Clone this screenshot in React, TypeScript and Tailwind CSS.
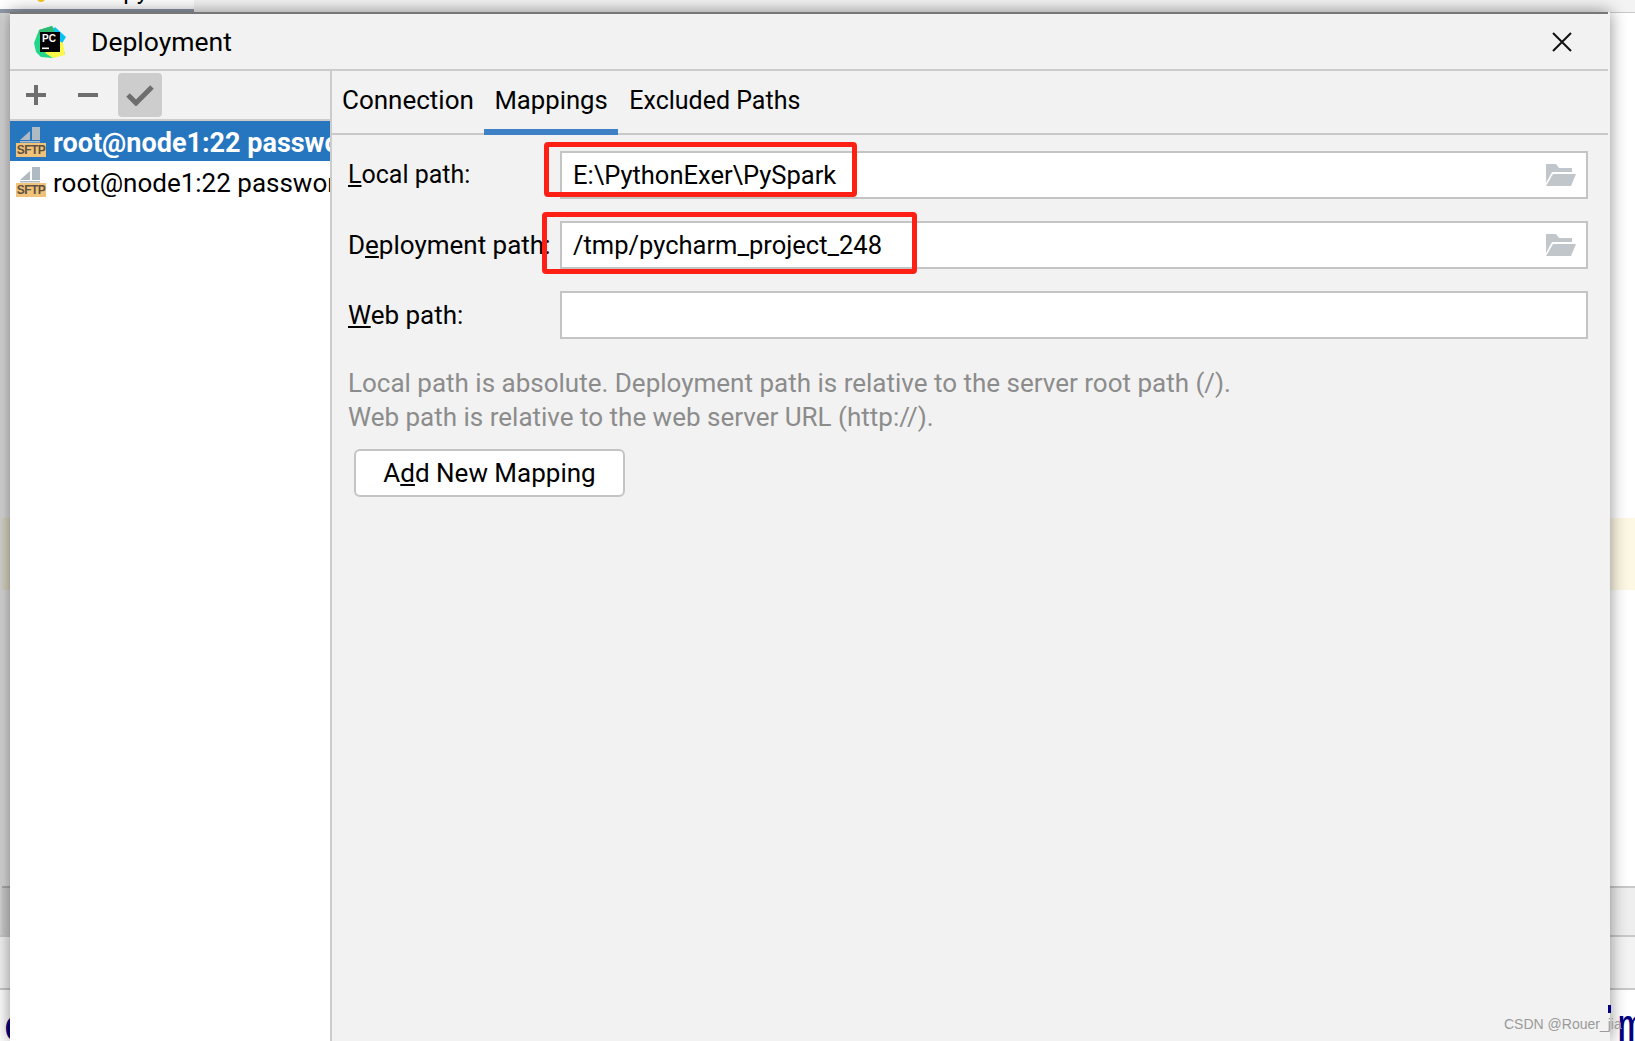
// App.tsx
const uiFont = "font-['Roboto','Liberation_Sans',sans-serif]";

function PyCharmLogo() {
  return (
    <svg width="34" height="34" viewBox="0 0 34 34" className="shrink-0">
      <polygon points="1,18 6,5 19,1 25,8 32,12 28,18 32,29 19,33 8,32 3,27" fill="#21d789" />
      <polygon points="22,2 33,12 28,20 18,8" fill="#07c3f2" />
      <polygon points="20,33 32,30 30,18 22,14 12,28" fill="#fcf84a" />
      <polygon points="6,5 19,1 22,8 6,10" fill="#2fb86e" />
      <rect x="7" y="7" width="20" height="20" fill="#000" />
      <rect x="9" y="22.5" width="7" height="1.6" fill="#fff" />
      <text x="9" y="17" fontSize="10" fontWeight="700" fill="#fff" fontFamily="Liberation Sans, sans-serif">
        PC
      </text>
    </svg>
  );
}

function SftpIcon() {
  return (
    <div className="relative w-[30px] h-[30px] shrink-0 mt-[1px]">
      <svg width="30" height="16" viewBox="0 0 30 16" className="block">
        <polygon points="4,13 14,4 14,13" fill="#b0bac2" />
        <rect x="16" y="0" width="8" height="13" fill="#b0bac2" />
        <rect x="4" y="14" width="20" height="1.5" fill="#b0bac2" />
      </svg>
      <div className="absolute left-0 top-[16px] w-[30px] h-[14px] bg-[#f0c27a] flex items-center justify-center font-['Liberation_Sans',sans-serif] text-[12px] leading-none font-bold tracking-[-0.6px] text-[#5f5040]">
        SFTP
      </div>
    </div>
  );
}

function FolderIcon() {
  return (
    <svg width="30" height="22" viewBox="0 0 30 22" className="shrink-0">
      <polygon points="0,0 10,0 13,4 26,4 26,8 6,8 0,19" fill="#c0c6ca" />
      <polygon points="7,10 30,10 25,22 0,22" fill="#c0c6ca" />
    </svg>
  );
}

function PathField({ value, folder }: { value?: string; folder?: boolean }) {
  return (
    <div className="flex-1 h-[48px] bg-white border-2 border-[#c4c4c4] flex items-center justify-between pl-[11px] pr-[10px] text-black text-[25.5px]">
      <span>{value}</span>
      {folder && <FolderIcon />}
    </div>
  );
}

function ConfigRow({ name, active }: { name: string; active?: boolean }) {
  return (
    <div
      className={
        active
          ? 'h-[40px] bg-[#2675bf] text-white text-[27px] font-bold flex items-center pl-[6px] gap-[7px] whitespace-nowrap overflow-hidden'
          : 'h-[40px] text-black flex items-center pl-[6px] gap-[7px] whitespace-nowrap overflow-hidden'
      }
    >
      <SftpIcon />
      <span className="mt-[4px]">{name}</span>
    </div>
  );
}

export default function App() {
  return (
    <div className={`relative w-[1635px] h-[1041px] overflow-hidden bg-white ${uiFont} text-[26px]`}>
      {/* IDE window behind the dialog */}
      <div className="flex flex-col h-full">
        <div className="h-[13px] flex bg-[#f3f3f3] border-b border-[#c8c8c8]">
          <div className="w-[194px] h-[9px] bg-white overflow-hidden flex">
            <div className="ml-[37px] mt-[-6px] w-[8px] h-[8px] rounded-full bg-[#f5c518]" />
            <span className="ml-[72px] mt-[-24px] text-[24px] leading-[30px] text-black">.py</span>
          </div>
        </div>
        <div className="w-[194px] h-[4px] bg-[#8f98a8] mt-[-4px]" />
        <div className="h-[505px]" />
        <div className="h-[72px] bg-[#fdf8e4]" />
        <div className="h-[296px]" />
        <div className="h-[49px] bg-[#eeeeee] border-t-2 border-[#c8c8c8]" />
        <div className="h-[53px] bg-[#f3f3f3] border-t-2 border-[#c8c8c8]" />
        <div className="flex-1 border-t-2 border-[#c8c8c8] flex justify-between overflow-hidden text-[#000080] font-['Liberation_Mono',monospace] text-[46px] leading-[60px]">
          <span className="ml-[3px] mt-[9px]">e</span>
          <span className="mr-[-10px] mt-[9px]">m</span>
        </div>
      </div>

      {/* Gutter strip left of the dialog */}
      <div className="absolute left-0 top-[13px] w-[10px] h-[922px] bg-black/15 border-l-2 border-[#d2d2d2]" />

      {/* Deployment dialog */}
      <div className="absolute left-[10px] top-[12px] w-[1600px] h-[1029px] bg-[#f2f2f2] flex flex-col shadow-[0_0_16px_rgba(0,0,0,0.45)]">
        <div className="h-[2px] w-[1598px] bg-[#777777]" />
        <div className="h-[57px] flex items-center justify-between pl-[23px] pr-[36px] border-b-2 border-[#cccccc] w-[1598px]">
          <div className="flex items-center gap-[24px] text-black text-[26.5px]">
            <PyCharmLogo />
            <span>Deployment</span>
          </div>
          <svg width="20" height="20" viewBox="0 0 20 20">
            <path d="M1 1 L19 19 M19 1 L1 19" stroke="#111" strokeWidth="2" fill="none" />
          </svg>
        </div>

        <div className="flex-1 flex min-h-0">
          {/* Left: server list */}
          <div className="w-[322px] shrink-0 border-r-2 border-[#cccccc] flex flex-col">
            <div className="h-[50px] shrink-0 border-b-2 border-[#cccccc] flex items-center pl-[16px]">
              <svg width="20" height="20" viewBox="0 0 20 20">
                <path d="M10 0 V20 M0 10 H20" stroke="#6e6e6e" strokeWidth="4" fill="none" />
              </svg>
              <svg width="20" height="20" viewBox="0 0 20 20" className="ml-[32px]">
                <path d="M0 10 H20" stroke="#6e6e6e" strokeWidth="4" fill="none" />
              </svg>
              <div className="ml-[20px] w-[44px] h-[44px] rounded-[4px] bg-[#cdcdcd] flex items-center justify-center">
                <svg width="28" height="22" viewBox="0 0 28 22">
                  <path d="M2 11 L10 19 L26 3" stroke="#6e6e6e" strokeWidth="5" fill="none" />
                </svg>
              </div>
            </div>
            <div className="flex-1 bg-white min-h-0">
              <ConfigRow name="root@node1:22 password" active />
              <ConfigRow name="root@node1:22 password" />
            </div>
          </div>

          {/* Right: tabs and mappings form */}
          <div className="flex-1 flex flex-col min-w-0">
            <div className="h-[64px] shrink-0 border-b-2 border-[#c8c8c8] flex w-[1276px] text-black whitespace-nowrap">
              <div className="h-[64px] pl-[10px] pr-[10px] pb-[6px] flex items-center">Connection</div>
              <div className="h-[64px] px-[10.5px] flex items-center border-b-[6px] border-[#3f81c6] text-[25.7px]">
                Mappings
              </div>
              <div className="h-[64px] px-[11px] pb-[5px] flex items-center text-[25px]">Excluded Paths</div>
            </div>

            <div className="pl-[16px] pr-[22px] pt-[16px] flex flex-col text-black">
              <div className="flex items-center mb-[22px]">
                <label className="w-[212px] shrink-0 text-[25px]">
                  <span className="underline">L</span>ocal path:
                </label>
                <PathField value="E:\PythonExer\PySpark" folder />
              </div>
              <div className="flex items-center mb-[22px]">
                <label className="w-[212px] shrink-0 whitespace-nowrap">
                  D<span className="underline">e</span>ployment path:
                </label>
                <PathField value="/tmp/pycharm_project_248" folder />
              </div>
              <div className="flex items-center">
                <label className="w-[212px] shrink-0">
                  <span className="underline">W</span>eb path:
                </label>
                <PathField />
              </div>

              <p className="mt-[27px] leading-[34px] text-[#8c8c8c]">
                Local path is absolute. Deployment path is relative to the server root path (/).
                <br />
                Web path is relative to the web server URL (http://).
              </p>

              <button className="mt-[15px] ml-[6px] w-[271px] h-[48px] bg-white border-2 border-[#c4c4c4] rounded-[6px] text-black flex items-center justify-center">
                <span>
                  A<span className="underline">d</span>d New Mapping
                </span>
              </button>
            </div>
          </div>
        </div>
      </div>

      {/* Red annotation boxes drawn on the screenshot */}
      <div className="absolute left-[544px] top-[142px] w-[313px] h-[55px] border-[5px] border-[#ff2015] rounded-[4px]" />
      <div className="absolute left-[542px] top-[212px] w-[375px] h-[62px] border-[5px] border-[#ff2015] rounded-[4px]" />

      {/* Tip of a character showing over the dialog edge */}
      <div className="absolute left-[1608px] top-[1005px] w-[3px] h-[8px] bg-[#000080]" />

      {/* Watermark */}
      <div className="absolute left-[1504px] top-[1015px] font-['Liberation_Sans',sans-serif] text-[14px] leading-[18px] text-[#9a9a9a]">
        CSDN @Rouer_jia
      </div>
    </div>
  );
}
